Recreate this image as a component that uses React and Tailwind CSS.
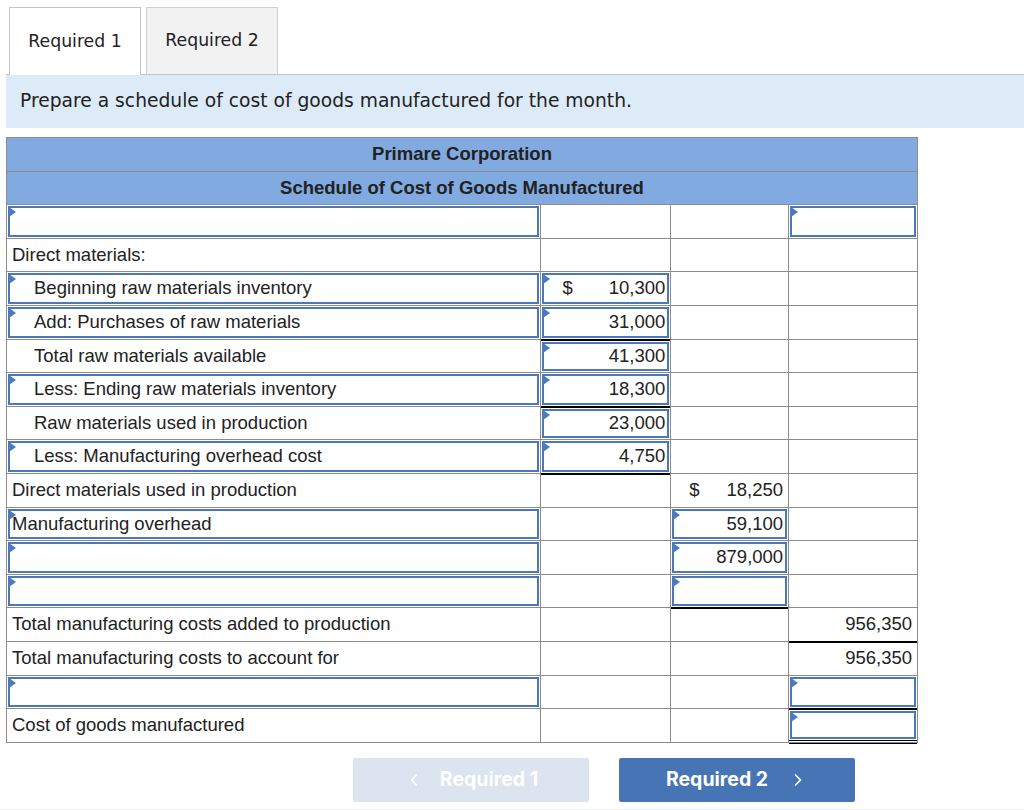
import React from 'react'
import { ChevronLeft, ChevronRight } from 'lucide-react'

// schedule rows: c1 = label cell, c2..c4 = amount columns
const rows = [
  { label: '', input: true, c4: { input: true } },
  { label: 'Direct materials:' },
  { label: 'Beginning raw materials inventory', indent: true, input: true, c2: { input: true, dollar: true, v: '10,300' } },
  { label: 'Add: Purchases of raw materials', indent: true, input: true, c2: { input: true, v: '31,000' } },
  { label: 'Total raw materials available', indent: true, c2: { input: true, v: '41,300', top: true } },
  { label: 'Less: Ending raw materials inventory', indent: true, input: true, c2: { input: true, v: '18,300' } },
  { label: 'Raw materials used in production', indent: true, c2: { input: true, v: '23,000', top: true } },
  { label: 'Less: Manufacturing overhead cost', indent: true, input: true, c2: { input: true, v: '4,750' } },
  { label: 'Direct materials used in production', c2: { top: true }, c3: { dollar: true, v: '18,250' } },
  { label: 'Manufacturing overhead', input: true, c3: { input: true, v: '59,100' } },
  { label: '', input: true, c3: { input: true, v: '879,000' } },
  { label: '', input: true, c3: { input: true } },
  { label: 'Total manufacturing costs added to production', c3: { top: true }, c4: { v: '956,350' } },
  { label: 'Total manufacturing costs to account for', c4: { v: '956,350', top: true } },
  { label: '', input: true, c4: { input: true } },
  { label: 'Cost of goods manufactured', c4: { input: true, top: true, dbl: true } },
]

// little blue marker in the corner of an editable cell
const Flag = () => (
  <span className="absolute -left-[1px] -top-[1px] w-0 h-0 border-t-[5px] border-b-[5px] border-l-[7px] border-t-transparent border-b-transparent border-l-[#4a7bc0]" />
)

const Amount = ({ cell }) => {
  const inner = (
    <div className="flex-1 flex items-center pr-[2px]">
      {cell.dollar && <span className="pl-[18px]">$</span>}
      <span className="ml-auto">{cell.v}</span>
    </div>
  )
  return (
    <div className="flex-1 flex flex-col min-w-0">
      {cell.top && <div className="h-[2px] -mt-px bg-black shrink-0" />}
      {cell.input ? (
        <div className="relative flex-1 m-[1px] border-2 border-[#4a78ba] flex">
          <Flag />
          {inner}
        </div>
      ) : (
        <div className="flex-1 flex pr-[3px]">{inner}</div>
      )}
      {cell.dbl && <div className="h-[4px] border-y border-black shrink-0 -mb-[2px]" />}
    </div>
  )
}

const Cell = ({ cell, w }) => (
  <div className={`${w} flex border-r border-b border-[#8c8c8c]`}>
    {cell ? <Amount cell={cell} /> : null}
  </div>
)

export default function App() {
  return (
    <div className="min-h-[810px] bg-white text-[#222]">
      {/* tabs */}
      <div className="ml-[6px] pl-[3px] pt-[7px] flex items-end gap-[5px] border-b border-[#c4c4c4] font-['DejaVu_Sans',sans-serif] text-[17.3px]">
        <div className="w-[132px] h-[68px] -mb-px bg-white border border-b-0 border-[#c4c4c4] flex items-center justify-center">
          Required 1
        </div>
        <div className="w-[132px] h-[67px] bg-[#f2f2f2] border border-b-0 border-[#cfcfcf] flex items-center justify-center">
          Required 2
        </div>
      </div>

      <div className="ml-[6px] h-[53px] bg-[#ddebf8] flex items-center pl-[14px] font-['DejaVu_Sans',sans-serif] text-[18.7px]">
        Prepare a schedule of cost of goods manufactured for the month.
      </div>

      {/* schedule */}
      <div className="mt-[9px] ml-[6px] w-[912px] border-l border-t border-[#8c8c8c] font-['Liberation_Sans',Arial,sans-serif] text-[18.5px] leading-none">
        <div className="h-[33.6px] bg-[#80aae0] border-r border-b border-[#8c8c8c] flex items-center justify-center font-bold">
          Primare Corporation
        </div>
        <div className="h-[33.6px] bg-[#80aae0] border-r border-b border-[#8c8c8c] flex items-center justify-center font-bold">
          Schedule of Cost of Goods Manufactured
        </div>
        {rows.map((r, i) => (
          <div key={i} className="h-[33.6px] flex">
            <div className="w-[535px] flex border-r border-b border-[#8c8c8c]">
              {r.input ? (
                <div className="relative flex-1 m-[1px] border-2 border-[#4a78ba] flex">
                  <Flag />
                  <span className={`self-center ${r.indent ? 'pl-[24px]' : 'pl-[2px]'}`}>{r.label}</span>
                </div>
              ) : (
                <span className={`self-center ${r.indent ? 'pl-[27px]' : 'pl-[5px]'}`}>{r.label}</span>
              )}
            </div>
            <Cell cell={r.c2} w="w-[130px]" />
            <Cell cell={r.c3} w="w-[118px]" />
            <Cell cell={r.c4} w="w-[129px]" />
          </div>
        ))}
      </div>

      {/* nav buttons */}
      <div className="mt-[15px] pl-[353px] flex gap-[30px] font-['Inter',sans-serif] font-bold text-[19.5px]">
        <button className="w-[236px] h-[44px] rounded-[2px] bg-[#dbe4ef] text-white flex items-center justify-center gap-[16px]">
          <ChevronLeft size={20} strokeWidth={2} />
          Required 1
        </button>
        <button className="w-[236px] h-[44px] rounded-[2px] bg-[#4674b4] text-white flex items-center justify-center gap-[20px]">
          Required 2
          <ChevronRight size={20} strokeWidth={2} />
        </button>
      </div>
      <div className="mt-[7px] h-[2px] bg-[#efefef]" />
    </div>
  )
}
